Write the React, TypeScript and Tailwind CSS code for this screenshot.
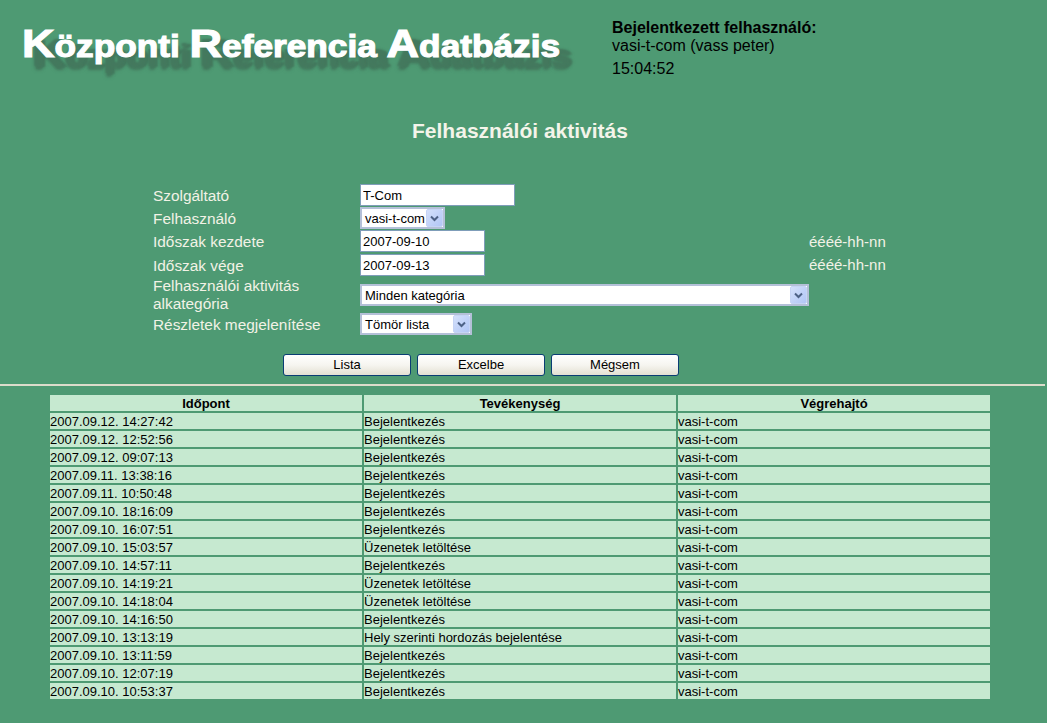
const font = { fontFamily: '"Liberation Sans", Arial, sans-serif' };

const rows = [
  ["2007.09.12. 14:27:42", "Bejelentkezés"],
  ["2007.09.12. 12:52:56", "Bejelentkezés"],
  ["2007.09.12. 09:07:13", "Bejelentkezés"],
  ["2007.09.11. 13:38:16", "Bejelentkezés"],
  ["2007.09.11. 10:50:48", "Bejelentkezés"],
  ["2007.09.10. 18:16:09", "Bejelentkezés"],
  ["2007.09.10. 16:07:51", "Bejelentkezés"],
  ["2007.09.10. 15:03:57", "Üzenetek letöltése"],
  ["2007.09.10. 14:57:11", "Bejelentkezés"],
  ["2007.09.10. 14:19:21", "Üzenetek letöltése"],
  ["2007.09.10. 14:18:04", "Üzenetek letöltése"],
  ["2007.09.10. 14:16:50", "Bejelentkezés"],
  ["2007.09.10. 13:13:19", "Hely szerinti hordozás bejelentése"],
  ["2007.09.10. 13:11:59", "Bejelentkezés"],
  ["2007.09.10. 12:07:19", "Bejelentkezés"],
  ["2007.09.10. 10:53:37", "Bejelentkezés"],
];

const Big = ({ children }: { children: string }) => (
  <span className="text-[39px]">{children}</span>
);

const TextBox = ({ value, width }: { value: string; width: string }) => (
  <input
    readOnly
    value={value}
    className={`${width} block h-[22px] border border-[#7f9db9] bg-white pl-[2px] text-[13px] text-black outline-none`}
  />
);

const SelectBox = ({ value, width }: { value: string; width: string }) => (
  <div className={`${width} relative h-[22px] border-2 border-[#b4c0d8] bg-white pl-[3px] text-[13px] leading-[19px] text-black`}>
    {value}
    <svg className="absolute top-0 right-0 h-[18px] w-[17px]" viewBox="0 0 17 18">
      <defs>
        <linearGradient id="arrowBg" x1="0" y1="0" x2="1" y2="1">
          <stop offset="0" stopColor="#d5e1fb" />
          <stop offset="1" stopColor="#b0c5f5" />
        </linearGradient>
      </defs>
      <rect x="0.5" y="0.5" width="16" height="17" rx="1.5" fill="url(#arrowBg)" stroke="#c6d4f5" />
      <path d="M5 7.5 L8.5 11 L12 7.5" fill="none" stroke="#4d6185" strokeWidth="2" />
    </svg>
  </div>
);

const FormRow = ({ label, height, children, hint }: { label: string; height: string; children: React.ReactNode; hint?: string }) => (
  <div className={`flex ${height}`}>
    <div className="flex w-[207px] items-center pr-[20px] text-[15.4px] leading-[18px] text-[#f2f2e6]">{label}</div>
    <div className="w-[449px]">{children}</div>
    {hint && <div className="flex items-center text-[15px] text-[#f2f2e6]">{hint}</div>}
  </div>
);

const Btn = ({ label }: { label: string }) => (
  <button className="h-[22px] w-[128px] rounded-[3px] border border-[#0a3d73] bg-gradient-to-b from-white via-[#f6f5f0] to-[#e3e0d2] pb-[2px] text-[13px] leading-none text-black">
    {label}
  </button>
);

export default function App() {
  return (
    <div className="min-h-[723px] overflow-hidden bg-[#4e9a73]" style={font}>
      {/* header */}
      <div className="flex h-[184px] w-[1040px] flex-col">
        <div className="flex h-[82px]">
          <div className="w-[612px] pt-[22px] pl-[22px]">
            <div className="origin-left scale-x-[1.155] text-[30.5px] leading-[44px] font-bold whitespace-nowrap text-white [-webkit-text-stroke:1.1px_white] [text-shadow:8px_9px_2px_#44795e,10px_11px_2px_#44795e,12px_10px_2px_#44795e,9px_13px_3px_#44795e]">
              <Big>K</Big>özponti <Big>R</Big>eferencia <Big>A</Big>datbázis
            </div>
          </div>
          <div className="pt-[19px] text-[16px] leading-[18px] text-black">
            <div className="font-bold">Bejelentkezett felhasználó:</div>
            <div>vasi-t-com (vass peter)</div>
            <div className="mt-[5px]">15:04:52</div>
          </div>
        </div>
        <div className="pt-[37px] text-center text-[21px] leading-[24px] font-bold text-[#f4f4ea]">Felhasználói aktivitás</div>
      </div>

      {/* form */}
      <div className="ml-[153px]">
        <FormRow label="Szolgáltató" height="h-[23px]"><TextBox value="T-Com" width="w-[155px]" /></FormRow>
        <FormRow label="Felhasználó" height="h-[23px]"><SelectBox value="vasi-t-com" width="w-[85px]" /></FormRow>
        <FormRow label="Időszak kezdete" height="h-[24px]" hint="éééé-hh-nn"><TextBox value="2007-09-10" width="w-[125px]" /></FormRow>
        <FormRow label="Időszak vége" height="h-[23px]" hint="éééé-hh-nn"><TextBox value="2007-09-13" width="w-[125px]" /></FormRow>
        <FormRow label="Felhasználói aktivitás alkategória" height="h-[36px]">
          <div className="pt-[7px]"><SelectBox value="Minden kategória" width="w-[449px]" /></div>
        </FormRow>
        <FormRow label="Részletek megjelenítése" height="h-[23px]"><SelectBox value="Tömör lista" width="w-[112px]" /></FormRow>
      </div>

      {/* buttons */}
      <div className="mt-[18px] ml-[283px] flex gap-[6px]">
        <Btn label="Lista" />
        <Btn label="Excelbe" />
        <Btn label="Mégsem" />
      </div>

      <div className="mt-[8px] mr-[2px] h-[2px] bg-[#dcdccb]" />

      {/* table */}
      <table className="mt-[7px] ml-[48px] w-[944px] table-fixed border-separate [border-spacing:2px] text-[13px] leading-[15px] text-black">
        <thead>
          <tr>
            <th className="h-[16px] bg-[#c6e9d0] p-0 pt-px font-bold">Időpont</th>
            <th className="h-[16px] bg-[#c6e9d0] p-0 pt-px font-bold">Tevékenység</th>
            <th className="h-[16px] bg-[#c6e9d0] p-0 pt-px font-bold">Végrehajtó</th>
          </tr>
        </thead>
        <tbody>
          {rows.map((r) => (
            <tr key={r[0]}>
              <td className="h-[16px] bg-[#c6e9d0] p-0 pt-px">{r[0]}</td>
              <td className="h-[16px] bg-[#c6e9d0] p-0 pt-px">{r[1]}</td>
              <td className="h-[16px] bg-[#c6e9d0] p-0 pt-px">vasi-t-com</td>
            </tr>
          ))}
        </tbody>
      </table>
    </div>
  );
}
